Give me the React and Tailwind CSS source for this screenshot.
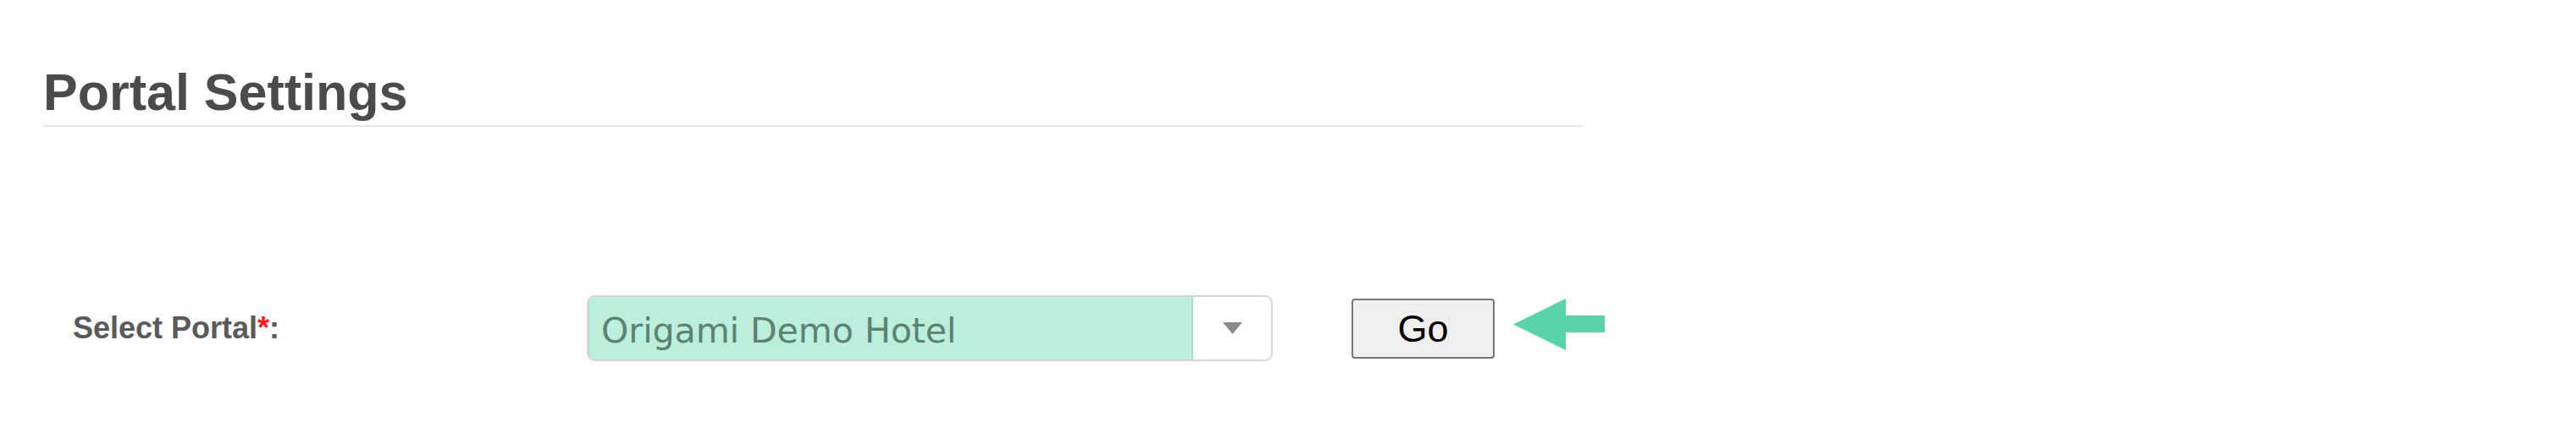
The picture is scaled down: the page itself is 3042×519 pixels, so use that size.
export default function App() {
  return (
    <div className="w-[3042px] h-[519px] bg-white overflow-hidden">
      {/* heading */}
      <div className="ml-[51px] w-[1819px] pt-[79px] pb-[8px] border-b-2 border-[#e6e6e6]">
        <h1 className="text-[61px] leading-none font-bold text-[#4b4b4b] font-['Liberation_Sans',Arial,sans-serif]">
          Portal Settings
        </h1>
      </div>

      {/* portal picker row */}
      <div className="mt-[199px] pl-[86px] flex items-center">
        <label className="w-[607px] text-[36px] leading-none font-bold text-[#5a5a5a] font-['Liberation_Sans',Arial,sans-serif]">
          Select Portal<span className="text-[#ff1a1a]">*</span>:
        </label>

        <div className="w-[810px] h-[78px] flex rounded-[9px] border-2 border-[#d6d6d6] overflow-hidden">
          <div className="w-[714px] flex items-center pt-[6px] pl-[14px] bg-[#bbeedb] border-l border-r-2 border-[#a9dcc8] rounded-l-[7px]">
            <span className="text-[41px] leading-none text-[#5b8273] font-['DejaVu_Sans',Verdana,sans-serif]">
              Origami Demo Hotel
            </span>
          </div>
          <div className="flex-1 flex items-center justify-center bg-white">
            <svg width="23" height="14" viewBox="0 0 23 14">
              <polygon points="0,0 23,0 11.5,14" fill="#8a8a8a" />
            </svg>
          </div>
        </div>

        <button className="ml-[93px] w-[169px] h-[71px] bg-[#efefef] border-2 border-[#767676] rounded-[4px] text-[45px] leading-none text-black font-['Liberation_Sans',Arial,sans-serif]">
          Go
        </button>

        <svg className="ml-[22px] mb-[9px]" width="108" height="61" viewBox="0 0 108 61">
          <polygon points="0,30.5 62,0 62,20 108,20 108,40 62,40 62,61" fill="#58d4a8" />
        </svg>
      </div>
    </div>
  );
}
